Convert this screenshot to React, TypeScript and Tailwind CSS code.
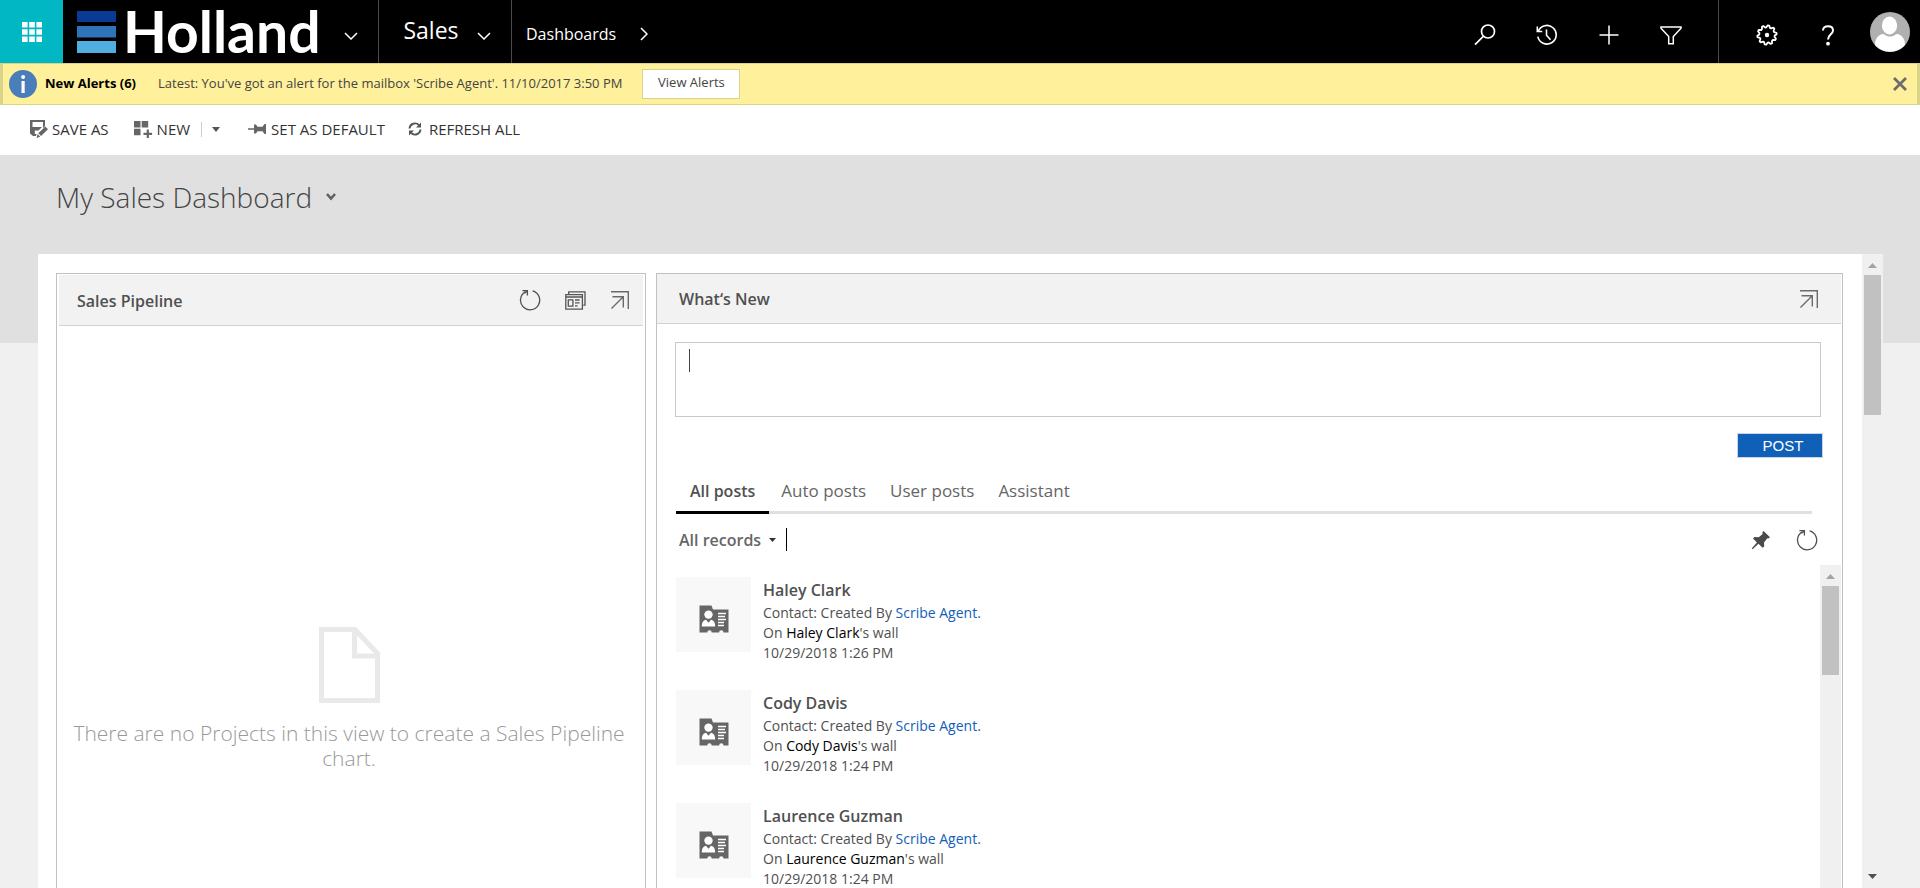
import React from "react";

const posts = [
  { name: "Haley Clark", time: "10/29/2018 1:26 PM" },
  { name: "Cody Davis", time: "10/29/2018 1:24 PM" },
  { name: "Laurence Guzman", time: "10/29/2018 1:24 PM" },
];

const GEAR_TEETH = 10;
const gearPoints = Array.from({ length: GEAR_TEETH * 4 }, (_, i) => {
  const angle = ((i + 0.5) / (GEAR_TEETH * 4)) * Math.PI * 2;
  const radius = i % 4 < 2 ? 9.7 : 7.7;
  return `${(11 + radius * Math.sin(angle)).toFixed(2)},${(11 - radius * Math.cos(angle)).toFixed(2)}`;
}).join(" ");

function NavChevron() {
  return (
    <svg width="14" height="8" viewBox="0 0 14 8" fill="none" stroke="#fff" strokeWidth="1.5">
      <path d="M1 1l6 6 6-6" />
    </svg>
  );
}

function RefreshCircle() {
  return (
    <svg width="22" height="22" viewBox="0 0 22 22" fill="none" stroke="#505050" strokeWidth="1.3">
      <path d="M13.6 1.9A9.6 9.6 0 1 1 6.2 2.9" />
      <path d="M3.4 1.6h5v5M8.2 1.8L5.6 4.4" />
    </svg>
  );
}

function ExpandIcon() {
  return (
    <svg width="20" height="20" viewBox="0 0 20 20" fill="none" stroke="#6a6a6a" strokeWidth="1.4">
      <path d="M1 1.7h17.3V19M2.5 6.7h10.8v10.8M13 7L1.5 18.5" />
    </svg>
  );
}

function PagesIcon() {
  return (
    <svg width="21" height="19" viewBox="0 0 21 19" fill="none" stroke="#555" strokeWidth="1.3">
      <path d="M3.7 3.200V.8H20v13.400h-1.700" />
      <path d="M.8 3.700h16.600v14.500H.8zM.8 6h16.600M3.300 8.800h4.600v6.300H3.300zM10 9h4.600M10 11.900h4.600M10 14.800h2.600" />
    </svg>
  );
}

function ContactIcon() {
  return (
    <svg width="30" height="28" viewBox="0 0 30 28">
      <path d="M.5.5h12l1.500 4h15.500v23h-5a2.200 2.200 0 0 0-4.400 0h-7.400a2.200 2.200 0 0 0-4.400 0H.5z" fill="#666" />
      <circle cx="9.500" cy="9.600" r="4.200" fill="#fff" />
      <path d="M2.800 21.500c0-4.200 1.600-6.300 4.200-6.700l2.500 3 2.500-3c2.600.4 4.200 2.500 4.200 6.700z" fill="#fff" />
      <path d="M19 8.500h8M19 11.500h7M19 14.500h8M19 17.500h6M19 20.500h6" stroke="#fff" strokeWidth="1.300" />
    </svg>
  );
}

function ScrollArrow({ down = false }: { down?: boolean }) {
  return (
    <svg width="9" height="5" viewBox="0 0 9 5">
      {down ? <path d="M0 0h9L4.500 5z" fill="#505050" /> : <path d="M0 5h9L4.500 0z" fill="#a3a3a3" />}
    </svg>
  );
}

function NavBar() {
  return (
    <header className="flex h-[63px] shrink-0 bg-black text-white">
      <button aria-label="App launcher" className="flex w-[63px] items-center justify-center bg-[#00b7c3]">
        <svg width="20" height="20" viewBox="0 0 20 20" fill="#fff">
          <path d="M0 0h5.600v5.600H0zM7.200 0h5.600v5.600H7.200zM14.400 0H20v5.600h-5.600zM0 7.200h5.600v5.600H0zM7.200 7.200h5.600v5.600H7.200zM14.400 7.200H20v5.600h-5.600zM0 14.400h5.600V20H0zM7.200 14.400h5.600V20H7.200zM14.400 14.400H20V20h-5.600z" />
        </svg>
      </button>
      <div className="flex w-[316px] items-center justify-between border-r border-[#4a4a4a] pr-5 pl-[14px]">
        <a href="#home" className="flex items-center gap-[7px]">
          <svg width="39" height="42" viewBox="0 0 39 42">
            <path d="M0 0h39v11H0z" fill="#093a94" />
            <path d="M0 15h39v11.500H0z" fill="#2f74b8" />
            <path d="M0 30h39v12H0z" fill="#50aee0" />
          </svg>
          <span className="font-['Lato',sans-serif] text-[57px] leading-[63px] font-bold">Holland</span>
        </a>
        <button aria-label="Switch organisation" className="pt-2">
          <NavChevron />
        </button>
      </div>
      <button className="flex w-[133px] items-center justify-center gap-[18px] border-r border-[#4a4a4a] pl-1">
        <span className="pb-[2px] text-[23px]">Sales</span>
        <span className="pt-2"><NavChevron /></span>
      </button>
      <button className="flex items-center gap-6 pt-1 pl-[14px] text-base">
        Dashboards
        <svg width="8" height="14" viewBox="0 0 8 14" fill="none" stroke="#fff" strokeWidth="1.500">
          <path d="M1 1l6 6-6 6" />
        </svg>
      </button>
      <div className="ml-auto flex items-center gap-10 border-r border-[#4a4a4a] pt-[7px] pr-9">
        <button aria-label="Search">
          <svg width="22" height="22" viewBox="0 0 22 22" fill="none" stroke="#fff" strokeWidth="1.700">
            <circle cx="14" cy="7.500" r="6.500" />
            <path d="M9.300 12.300L1 20.600" />
          </svg>
        </button>
        <button aria-label="Recent">
          <svg width="22" height="22" viewBox="0 0 22 22" fill="none" stroke="#fff" strokeWidth="1.600">
            <path d="M2.300 7.200A9.300 9.300 0 1 1 1.800 12.700M1.300 2.500v5h5M10.500 5.500v5.700l4 4.500" />
          </svg>
        </button>
        <button aria-label="Create">
          <svg width="22" height="22" viewBox="0 0 22 22" stroke="#fff" strokeWidth="1.500">
            <path d="M11 1.500v19M1.500 11h19" />
          </svg>
        </button>
        <button aria-label="Advanced find">
          <svg width="22" height="22" viewBox="0 0 22 22" fill="none" stroke="#fff" strokeWidth="1.500">
            <path d="M1 3h20v1.200l-7.700 8.300v7.200H8.700v-7.200L1 4.200z" />
          </svg>
        </button>
      </div>
      <div className="flex items-center pr-[10px] pl-[37px]">
        <button aria-label="Settings" className="pt-[7px]">
          <svg width="22" height="22" viewBox="0 0 22 22" fill="none" stroke="#fff" strokeWidth="1.800" strokeLinejoin="round">
            <polygon points={gearPoints} />
            <circle cx="11" cy="11" r="2.200" fill="#fff" stroke="none" />
          </svg>
        </button>
        <button aria-label="Help" className="w-[92px] pt-[7px] pl-2">
          <svg className="mx-auto" width="14" height="21" viewBox="0 0 14 21" fill="none" stroke="#fff" strokeWidth="2">
            <path d="M2 5.500C2 2.700 4 1.200 7 1.200s5 1.700 5 4.300c0 3.700-5 4-5 9" />
            <circle cx="7" cy="18.700" r="1.900" fill="#fff" stroke="none" />
          </svg>
        </button>
        <button aria-label="Account">
          <svg width="40" height="40" viewBox="0 0 40 40">
            <circle cx="20" cy="20" r="20" fill="#b0b0b0" />
            <path d="M5 33c0-7 4-11 8.500-11 2 1.500 4 2.600 6.500 2.600s4.500-1.100 6.500-2.600C31 22 35 26 35 33a20 20 0 0 1-30 0z" fill="#fff" />
            <ellipse cx="19.500" cy="13.500" rx="7.600" ry="9" fill="#fff" />
          </svg>
        </button>
      </div>
    </header>
  );
}

function AlertBar() {
  return (
    <div className="flex h-[42px] shrink-0 items-center border-x-[3px] border-y border-[#d9d48a] bg-[#fff09b] pl-[6px] text-[13px] text-[#444]">
      <svg width="28" height="28" viewBox="0 0 28 28">
        <circle cx="14" cy="14" r="14" fill="#4a7ebb" />
        <path d="M12.500 11h3.200v12h-3.200z" fill="#fff" />
        <circle cx="14.100" cy="7" r="2" fill="#fff" />
      </svg>
      <strong className="pr-[22px] pl-2 font-bold whitespace-nowrap text-black">New Alerts (6)</strong>
      <span>Latest: You've got an alert for the mailbox 'Scribe Agent'. 11/10/2017 3:50 PM</span>
      <button className="ml-5 h-[30px] w-[98px] border border-[#d9d48a] bg-white pb-[2px]">View Alerts</button>
      <button aria-label="Dismiss" className="mr-[10px] ml-auto">
        <svg width="14" height="14" viewBox="0 0 14 14" stroke="#6d6d6d" strokeWidth="2.800">
          <path d="M1 1l12 12M13 1L1 13" />
        </svg>
      </button>
    </div>
  );
}

function Toolbar() {
  return (
    <nav className="flex h-[50px] shrink-0 items-center bg-white pb-[2px] pl-[30px] text-[15px] text-[#333]">
      <button className="flex items-center gap-1">
        <svg width="18" height="18" viewBox="0 0 18 18" fill="#666">
          <path d="M0 0h15v6l-2 2.200V2H2.500v5H12L8.500 10.500H4.800V14h1.700L6 16H3L0 13.500z" />
          <path d="M15.300 6.500L18 9.200 11 16l-2.700-2.700zM7.600 14.100l2.600 2.600L6.600 18z" />
        </svg>
        SAVE AS
      </button>
      <button className="ml-[25px] flex items-center gap-1">
        <svg width="19" height="17" viewBox="0 0 19 17" fill="#666">
          <path d="M0 0h6.500v6.500H0zM7.700 0h6.500v6.500H7.700zM0 7.700h6.500v6.500H0zM12.700 8.500h2.200v3.200h3.200v2.200h-3.200v3.100h-2.200v-3.100H9.500v-2.200h3.200z" />
        </svg>
        NEW
      </button>
      <button aria-label="More new options" className="ml-[11px] flex h-[15px] items-center border-l border-[#ccc] pl-[10px]">
        <svg width="8" height="5" viewBox="0 0 8 5" fill="#555"><path d="M0 0h8L4 5z" /></svg>
      </button>
      <button className="ml-7 flex items-center gap-1">
        <svg width="19" height="12" viewBox="0 0 19 12" fill="#666">
          <path d="M0 5.200h6V1.500h2l1.500 2.200h5L16.500 1H18v10h-1.500l-2-2.700h-5L8 10.500H6V6.800H0z" />
        </svg>
        SET AS DEFAULT
      </button>
      <button className="ml-[23px] flex items-center gap-[7px]">
        <svg width="14" height="14" viewBox="0 0 14 14" fill="none" stroke="#555" strokeWidth="1.900">
          <path d="M1.500 6.500a5.500 5.500 0 0 1 9.500-3.300M12.500 7.500a5.500 5.500 0 0 1-9.500 3.300" />
          <path d="M13 .5v5H8zM1 13.500v-5h5z" fill="#555" stroke="none" />
        </svg>
        REFRESH ALL
      </button>
    </nav>
  );
}

function PipelinePanel() {
  return (
    <section className="flex w-[590px] shrink-0 flex-col border border-b-0 border-[#bcc3c3] px-[2px] pt-[1px]">
      <div className="flex h-[51px] shrink-0 items-center border-b border-[#d0d3d3] bg-[#f2f2f2] pr-[13px] pl-[18px]">
        <h2 className="pt-[2px] text-[16px] font-semibold text-[#505050]">Sales Pipeline</h2>
        <div className="ml-auto flex items-center gap-6">
          <button aria-label="Refresh"><RefreshCircle /></button>
          <button aria-label="View records"><PagesIcon /></button>
          <button aria-label="Enlarge"><ExpandIcon /></button>
        </div>
      </div>
      <div className="flex flex-col items-center pr-3 pl-2 pt-[301px] text-center text-[21px] leading-[25px] font-light text-[#999]">
        <svg width="61" height="76" viewBox="0 0 61 76" fill="none" stroke="#e9e9e9" strokeWidth="5">
          <path d="M2.500 2.500H36L58.500 26.500v47h-56z" />
          <path d="M35.500 4v25h22" />
        </svg>
        <p className="pt-[18px]">There are no Projects in this view to create a Sales Pipeline chart.</p>
      </div>
    </section>
  );
}

function PostItem({ name, time }: { name: string; time: string }) {
  return (
    <li className="flex gap-3">
      <div className="flex size-[75px] shrink-0 items-center justify-center bg-[#f8f8f8] pt-2">
        <ContactIcon />
      </div>
      <div className="text-[14px] leading-5 text-[#505050]">
        <h3 className="text-[16px] leading-[26px] font-semibold">{name}</h3>
        <p>Contact: Created By <a href="#agent" className="text-[#1160b7]">Scribe Agent.</a></p>
        <p>On <a href="#wall" className="text-black">{name}</a>'s wall</p>
        <p>{time}</p>
      </div>
    </li>
  );
}

function WhatsNewPanel() {
  return (
    <section className="flex min-w-0 grow flex-col border border-b-0 border-[#bcc3c3] pr-px">
      <div className="flex h-[50px] shrink-0 items-center border-b border-[#d0d3d3] bg-[#f2f2f2] pr-[22px] pl-[22px]">
        <h2 className="text-[16px] font-semibold text-[#505050]">What‘s New</h2>
        <button aria-label="Enlarge" className="ml-auto"><ExpandIcon /></button>
      </div>
      <div className="flex shrink-0 flex-col pr-5 pl-[18px] pt-[18px]">
        <div className="relative flex">
          <textarea aria-label="Enter post here" className="h-[75px] grow resize-none border border-[#c8c8c8] px-3 py-2 text-base" />
          <span className="absolute top-[7px] left-[14px] h-[23px] w-px bg-[#444]" />
        </div>
        <button className="mt-4 -mr-[2px] h-[25px] w-[86px] self-end border border-[#c9d6e6] bg-[#1160b7] pl-[6px] font-['Liberation_Sans',sans-serif] text-[15px] leading-[22px] text-white">POST</button>
        <div className="mt-5 mr-[9px] ml-px flex border-b-3 border-[#e0e0e0] text-[17px] leading-6 text-[#666]">
          <button className="-mb-[3px] h-9 border-b-3 border-black px-[14px] pb-[7px] text-[16px] font-semibold text-[#505050]">All posts</button>
          <button className="-mb-[3px] h-9 border-b-3 border-transparent px-3 pb-[7px]">Auto posts</button>
          <button className="-mb-[3px] h-9 border-b-3 border-transparent px-3 pb-[7px]">User posts</button>
          <button className="-mb-[3px] h-9 border-b-3 border-transparent px-3 pb-[7px]">Assistant</button>
        </div>
        <div className="flex h-[51px] items-center pl-1">
          <button className="flex items-center gap-2 text-[16px] font-semibold text-[#666]">
            All records
            <svg width="7" height="4" viewBox="0 0 7 4" fill="#333"><path d="M0 0h7L3.500 4z" /></svg>
          </button>
          <span className="ml-[10px] h-[23px] w-px bg-black" />
          <button aria-label="Pin filter" className="ml-auto">
            <svg width="20" height="20" viewBox="0 0 20 20" fill="#4a4a4a">
              <path d="M12.500 1l6.500 6.300-1.700 1.200-1-.3-3.300 4.200.2 4-1.700 1.400-4-4L1.500 19.300l-.8-.8 5.200-6L2 8.500l1.500-1.600 4.200.3L11.700 4l-.4-1.500z" />
            </svg>
          </button>
          <button aria-label="Refresh posts" className="mr-[3px] ml-[25px]"><RefreshCircle /></button>
        </div>
      </div>
      <div className="flex min-h-0 grow">
        <ul className="flex min-w-0 grow flex-col gap-[27px] overflow-hidden pt-3 pl-[19px]">
          {posts.map((p) => <PostItem key={p.name} {...p} />)}
        </ul>
        <div className="flex w-[21px] shrink-0 flex-col items-center bg-[#f0f0f0] pt-[9px]">
          <ScrollArrow />
          <div className="mt-[7px] h-[89px] w-[17px] bg-[#c1c1c1]" />
        </div>
      </div>
    </section>
  );
}

export default function App() {
  return (
    <div className="flex h-screen flex-col overflow-hidden bg-[#f0f0f0] font-['Open_Sans','Noto_Sans',sans-serif]">
      <NavBar />
      <AlertBar />
      <Toolbar />
      <div className="h-[99px] shrink-0 bg-[#e0e0e0] pt-[20px] pl-14">
        <button className="flex items-center gap-[14px] text-[28px] leading-[44px] font-light text-[#444]">
          <h1>My Sales Dashboard</h1>
          <svg width="10" height="8" viewBox="0 0 10 8" fill="none" stroke="#606060" strokeWidth="2.600"><path d="M1 1l4 4.500L9 1" /></svg>
        </button>
      </div>
      <main className="flex min-h-0 grow bg-linear-to-b from-[#e0e0e0] from-[89px] to-[#f0f0f0] to-[89px] pr-[37px] pl-[38px]">
        <div className="flex min-w-0 grow gap-[10px] bg-white pt-[19px] pr-[19px] pl-[18px]">
          <PipelinePanel />
          <WhatsNewPanel />
        </div>
        <div className="flex w-[21px] shrink-0 flex-col items-center bg-[#f0f0f0] py-[9px]">
          <ScrollArrow />
          <div className="mt-[7px] mb-auto h-[140px] w-[17px] bg-[#c1c1c1]" />
          <ScrollArrow down />
        </div>
      </main>
    </div>
  );
}
